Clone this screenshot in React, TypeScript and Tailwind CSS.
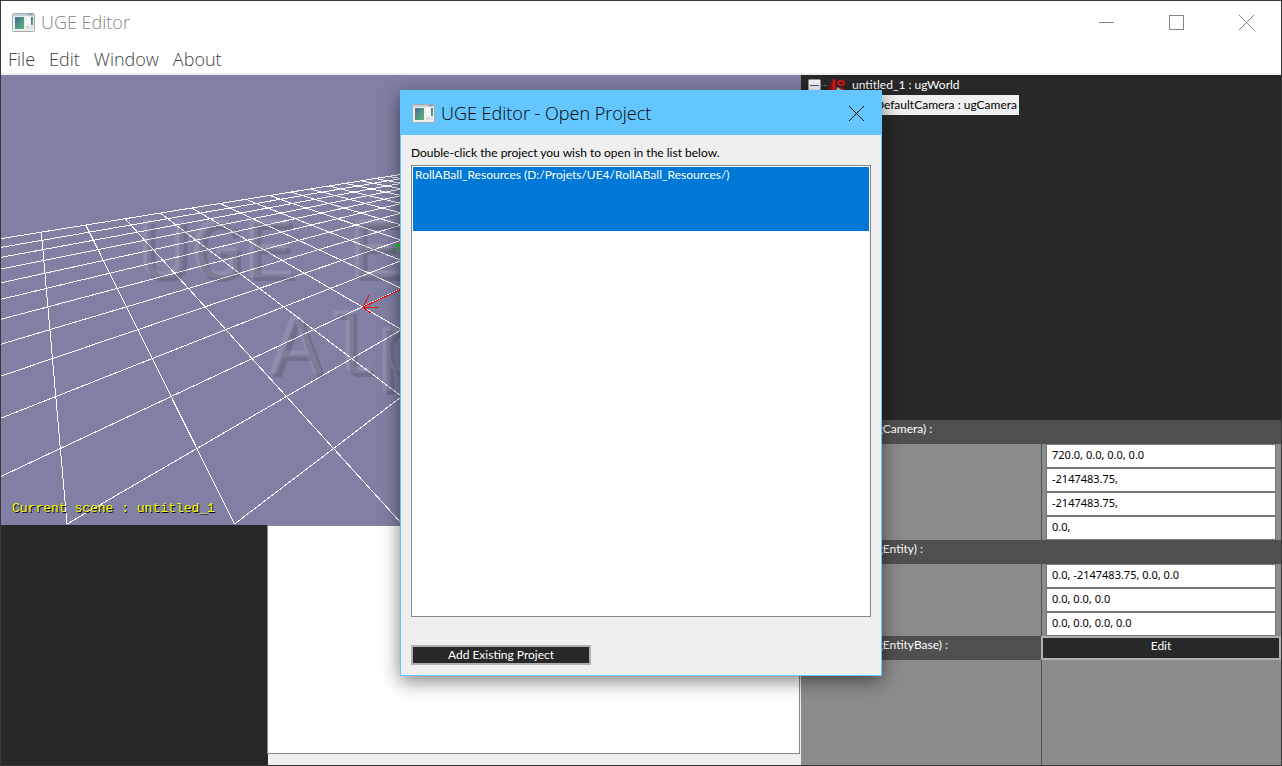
import React from 'react';

const HORIZON = 40;
const FLOOR = 449;

// Where grid column i and grid row j meet on the perspective floor.
function meet(i: number, j: number) {
  const depth = 0.002448 + 0.000554 * (i - j);
  const y = HORIZON + 1 / depth;
  const x = 30 + ((36 + 167.5 * i) * (y - HORIZON)) / 408.5;
  return { x, y };
}

const columns = Array.from({ length: 25 }, (_, i) => ({ from: meet(i, -11), to: { x: 66 + 167.5 * i, y: FLOOR } }));
const rows = Array.from({ length: 16 }, (_, k) => ({ from: meet(24, k - 11), to: { x: 66 + 167.5 * (k - 11), y: FLOOR } }));
const gridLines = [...columns, ...rows];

function AppIcon() {
  return (
    <svg width="23" height="19" viewBox="0 0 23 19" aria-hidden="true">
      <defs>
        <linearGradient id="screen" x1="0" y1="0" x2="1" y2="1">
          <stop offset="0" stopColor="#3f6f9c" />
          <stop offset="1" stopColor="#5fb474" />
        </linearGradient>
      </defs>
      <rect x="0.5" y="0.5" width="22" height="18" rx="1" fill="#eceeef" stroke="#a3abb1" />
      <rect x="1" y="1" width="21" height="2" fill="#c6ced6" />
      <rect x="16" y="1" width="5" height="1" fill="#8c9aa8" />
      <rect x="3" y="4" width="9" height="12" fill="url(#screen)" />
      <rect x="14" y="4" width="4" height="7" fill="#fafafa" />
      <rect x="19" y="4" width="2" height="8" fill="url(#screen)" />
      <rect x="14" y="13" width="4" height="3" fill="#dcdcdc" />
      <rect x="19" y="13" width="2" height="3" fill="#dcdcdc" />
    </svg>
  );
}

function CloseIcon() {
  return (
    <svg width="15" height="15" viewBox="0 0 15 15" stroke="currentColor" fill="none" aria-hidden="true">
      <path d="M0 0L15 15M15 0L0 15" />
    </svg>
  );
}

function TitleBar() {
  return (
    <header className="flex h-[43px] shrink-0 items-center bg-white pl-[11px] text-[#858585]">
      <AppIcon />
      <h1 className="ml-[6px] flex-1 text-[18px] font-light">UGE Editor</h1>
      <button aria-label="Minimize" className="flex h-full w-[70px] items-center justify-center">
        <svg width="15" height="15" viewBox="0 0 15 15" stroke="currentColor" fill="none">
          <path d="M0 7.5H15" />
        </svg>
      </button>
      <button aria-label="Maximize" className="flex h-full w-[70px] items-center justify-center">
        <svg width="15" height="15" viewBox="0 0 15 15" stroke="currentColor" fill="none">
          <rect x="0.5" y="0.5" width="14" height="14" />
        </svg>
      </button>
      <button aria-label="Close" className="flex h-full w-[70px] items-center justify-center">
        <CloseIcon />
      </button>
    </header>
  );
}

function MenuBar() {
  return (
    <nav className="flex h-[31px] shrink-0 items-center gap-[14px] border-b-2 border-[#efefef] bg-white pl-[7px] pt-px text-[18px] font-light text-[#404040]">
      <button>File</button>
      <button>Edit</button>
      <button>Window</button>
      <button>About</button>
    </nav>
  );
}

function Viewport() {
  return (
    <section className="relative h-[450px] shrink-0 overflow-hidden bg-[#8080a5]">
      <svg className="block h-full w-full" viewBox="0 0 800 450" preserveAspectRatio="xMinYMin slice" shapeRendering="crispEdges" fill="none">
        <g stroke="#ffffff">
          {gridLines.map((l, k) => (
            <line key={k} x1={l.from.x} y1={l.from.y} x2={l.to.x} y2={l.to.y} />
          ))}
        </g>
        <path stroke="#ff0000" d="M420 205L362 232M368 220L362 232L377 232M362 232L370 238" />
        <path stroke="#00e000" d="M403 163L393 178M403 165L394 172" />
      </svg>
      <p className="absolute inset-x-0 top-[131px] text-center font-['Liberation_Mono',monospace] text-[88px] leading-[96px] text-white/10 [text-shadow:4px_4px_0_rgba(0,0,0,0.14)]">
        UGE Editor
        <br />
        Alpha
      </p>
      <p className="absolute bottom-[7px] left-[11px] font-['Liberation_Mono',monospace] text-[13px] leading-[18px] text-[#ffff00] [text-shadow:1px_1px_0_#000]">
        Current scene : untitled_1
      </p>
    </section>
  );
}

function SceneTree() {
  return (
    <section className="h-[345px] shrink-0 bg-[#282828] font-['Lato',sans-serif] text-[12px] leading-[20px] text-white">
      <div className="flex h-[20px] items-center pl-[7px]">
        <svg width="40" height="20" viewBox="0 0 40 20" aria-hidden="true">
          <rect x="0.5" y="4.5" width="12" height="12" rx="1" fill="#f4f4f4" stroke="#919191" />
          <path d="M2 10.5H11" stroke="#3c5a94" />
          <path d="M14 10.5H20" stroke="#8a8a8a" strokeDasharray="1 1" />
          <path d="M25 4L27 4L28 16H20Z" fill="#d81818" />
          <path d="M25 4L21 15L24 16Z" fill="#8c0c0c" />
          <ellipse cx="33" cy="8" rx="4" ry="3" fill="#d81818" />
          <ellipse cx="33" cy="8" rx="2" ry="1" fill="#4a0808" />
          <path d="M29 12L36 16H28Z" fill="#b9c4c8" />
          <path d="M30 12L36 13L37 16Z" fill="#c01515" />
        </svg>
        <span className="ml-[4px]">untitled_1 : ugWorld</span>
      </div>
      <div className="flex h-[20px] justify-end pr-[262px]">
        <span className="bg-[#f0f0f0] px-[2px] text-black">DefaultCamera : ugCamera</span>
      </div>
    </section>
  );
}

function GroupHeader({ title, action }: { title: string; action?: string }) {
  return (
    <div className="flex h-[24px] shrink-0 bg-[#505050] text-[12px] leading-[18px] text-white">
      <h2 className="w-[240px] pl-[69px]">{title}</h2>
      {action && (
        <button className="flex-1 border-2 border-[#b0b0b0] bg-[#282828] pb-[4px] leading-[16px]">{action}</button>
      )}
    </div>
  );
}

function FieldGroup({ name, values }: { name: string; values: string[] }) {
  return (
    <div className="flex shrink-0 bg-[#8c8c8c]">
      <div className="w-[241px] border-r border-[#505050]" />
      <div className="flex-1 pl-[4px] pr-[5px]">
        {values.map((v, k) => (
          <input
            key={k}
            aria-label={`${name} ${k + 1}`}
            defaultValue={v}
            className="block h-[24px] w-full border border-[#787878] bg-white pb-[3px] pl-[5px] font-['Noto_Sans',sans-serif] text-[11px] text-black"
          />
        ))}
      </div>
    </div>
  );
}

function Inspector() {
  return (
    <section className="flex flex-1 flex-col bg-[#8c8c8c] font-['Lato',sans-serif]">
      <GroupHeader title="ugCamera) :" />
      <FieldGroup name="Camera" values={['720.0, 0.0, 0.0, 0.0', '-2147483.75,', '-2147483.75,', '0.0,']} />
      <GroupHeader title="ugEntity) :" />
      <FieldGroup name="Entity" values={['0.0, -2147483.75, 0.0, 0.0', '0.0, 0.0, 0.0', '0.0, 0.0, 0.0, 0.0']} />
      <GroupHeader title="ugEntityBase) :" action="Edit" />
      <div className="w-[241px] flex-1 border-r border-[#505050]" />
    </section>
  );
}

function OpenProjectDialog() {
  return (
    <div className="absolute inset-0 flex items-center justify-center">
      <div
        role="dialog"
        aria-labelledby="dialog-title"
        className="w-[482px] border border-[#64c6ff] bg-[#efefef] text-black shadow-[0_5px_18px_rgba(0,0,0,0.5)]"
      >
        <div className="flex h-[44px] items-center bg-[#64c6ff] pl-[11px] pr-px">
          <AppIcon />
          <h2 id="dialog-title" className="ml-[6px] flex-1 text-[18px] font-light">
            UGE Editor - Open Project
          </h2>
          <button aria-label="Close dialog" className="flex h-full w-[48px] items-center justify-center">
            <CloseIcon />
          </button>
        </div>
        <div className="px-[10px] pb-[10px] pt-[8px] font-['Lato',sans-serif] text-[12px]">
          <p className="leading-[20px]">Double-click the project you wish to open in the list below.</p>
          <ul className="mt-[2px] h-[452px] border border-[#828790] bg-white p-px">
            <li>
              <button className="flex h-[64px] w-full items-start bg-[#0078d7] pl-[2px] leading-[16px] text-white">
                RollABall_Resources (D:/Projets/UE4/RollABall_Resources/)
              </button>
            </li>
          </ul>
          <button className="mt-[28px] block h-[20px] w-[180px] border-2 border-[#b0b0b0] bg-[#282828] leading-[16px] text-white">
            Add Existing Project
          </button>
        </div>
      </div>
    </div>
  );
}

export default function App() {
  return (
    <div className="relative flex min-h-screen flex-col border border-[#383838] bg-[#efefef] font-['Open_Sans','Noto_Sans',sans-serif]">
      <TitleBar />
      <MenuBar />
      <main className="flex flex-1">
        <div className="flex min-w-0 flex-1 flex-col">
          <Viewport />
          <div className="flex flex-1">
            <div className="w-1/3 bg-[#282828]" />
            <div className="-ml-px flex-1 pb-[11px] pr-px">
              <div className="h-full border border-[#828790] bg-white" />
            </div>
          </div>
        </div>
        <aside className="flex w-[480px] shrink-0 flex-col">
          <SceneTree />
          <Inspector />
        </aside>
      </main>
      <OpenProjectDialog />
    </div>
  );
}
